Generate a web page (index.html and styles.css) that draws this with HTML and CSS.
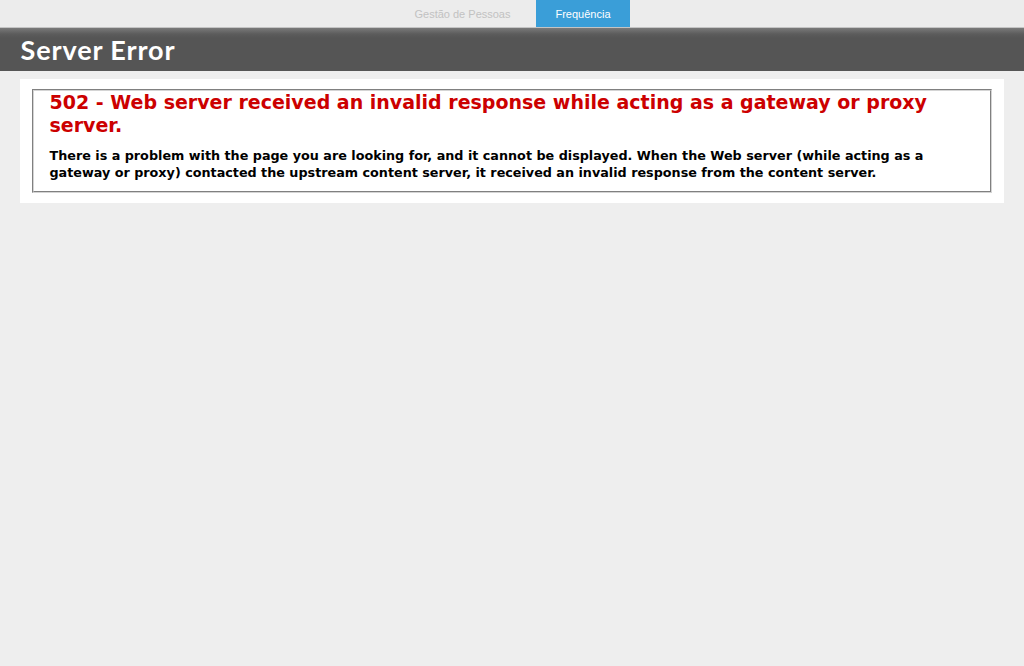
FILE: index.html
```html
<!DOCTYPE html>
<html lang="en">
<head>
<meta charset="utf-8">
<title>502 - Web server received an invalid response while acting as a gateway or proxy server.</title>
<link rel="stylesheet" href="styles.css">
</head>
<body>
<div class="tabbar">
  <div class="tabs">
    <a class="tab">Gestão de Pessoas</a>
    <a class="tab active">Frequência</a>
  </div>
</div>
<div class="header"><h1>Server Error</h1></div>
<div class="content">
  <div class="content-container">
    <fieldset>
      <h2>502 - Web server received an invalid response while acting as a gateway or proxy server.</h2>
      <h3>There is a problem with the page you are looking for, and it cannot be displayed. When the Web server (while acting as a gateway or proxy) contacted the upstream content server, it received an invalid response from the content server.</h3>
    </fieldset>
  </div>
</div>
</body>
</html>
```
FILE: styles.css
```css
html, body {
  margin: 0;
  padding: 0;
}
body {
  background: #eeeeee;
  font-family: "DejaVu Sans", Verdana, sans-serif;
  font-size: 11.2px;
}
.tabbar {
  height: 27px;
  border-bottom: 1px solid #c4c4c4;
  background: #ececec;
}
.tabs {
  display: flex;
  justify-content: center;
  height: 27px;
}
.tab {
  display: flex;
  align-items: center;
  justify-content: center;
  height: 27px;
  font-family: "Liberation Sans", Arial, sans-serif;
  font-size: 11px;
  color: #c2c2c2;
}
.tab:first-child {
  width: 137px;
  padding-right: 5px;
}
.tab.active {
  width: 94px;
  background: #3a9ed8;
  color: #ffffff;
}
.header {
  padding: 6px 2%;
  background: linear-gradient(to bottom, #7a7a7a 0px, #5c5c5c 6px, #555555 10px);
  color: #ffffff;
}
h1 {
  margin: 0;
  font-family: "Lato", "DejaVu Sans", sans-serif;
  font-weight: bold;
  font-size: 27px;
  letter-spacing: 0.9px;
  line-height: 31px;
  color: #ffffff;
}
.content {
  margin: 0 0 0 2%;
}
.content-container {
  background: #ffffff;
  width: 96%;
  margin-top: 8px;
  padding: 10px;
}
fieldset {
  margin: 0 2px;
  padding: 0 15px 10px 15px;
  border: 2px groove #d4d4d4;
}
h2 {
  margin: 0;
  font-size: 19px;
  line-height: 23px;
  font-weight: bold;
  color: #cc0000;
}
h3 {
  margin: 10px 0 0 0;
  font-size: 12.75px;
  line-height: 17px;
  font-weight: bold;
  color: #000000;
}
```
